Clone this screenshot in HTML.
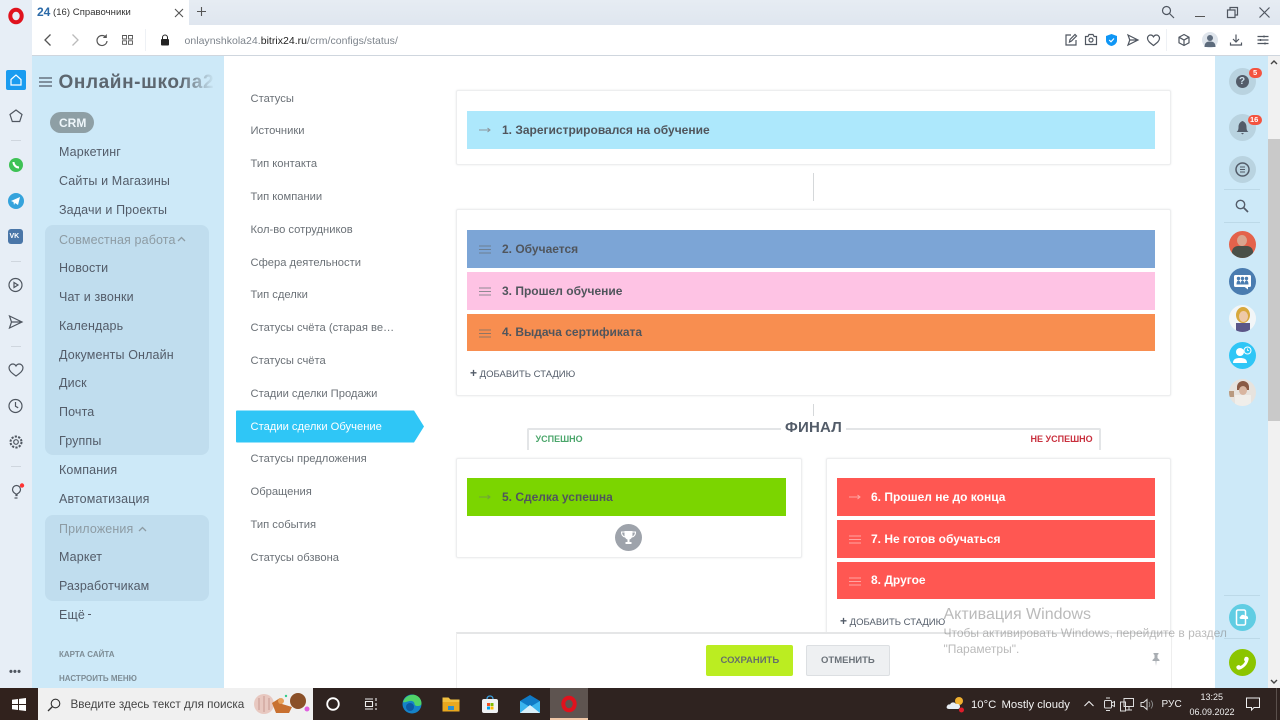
<!DOCTYPE html>
<html lang="ru"><head><meta charset="utf-8"><title>Справочники</title>
<style>
*{box-sizing:border-box}
html,body{margin:0;padding:0;width:1280px;height:720px;overflow:hidden;background:#fff;font-family:"Liberation Sans","Noto Sans CJK SC",sans-serif}
#w{position:absolute;left:0;top:0;width:1280px;height:720px;overflow:hidden;filter:blur(.3px)}
.a{position:absolute}
.t{position:absolute;white-space:nowrap;line-height:16px}
.m{position:absolute;left:59px;font-size:12.5px;color:#535c69;white-space:nowrap;line-height:16px;letter-spacing:.13px}
.s{position:absolute;left:250.5px;font-size:11.2px;color:#6b7177;white-space:nowrap;line-height:16px}
.box{position:absolute;background:#fff;border:1px solid #edeeef;border-radius:2px;box-shadow:0 0 2px #e8eaeb}
.bar{position:absolute;height:38px}
.bar b{position:absolute;left:35px;top:11px;font-size:12px;line-height:16px;white-space:nowrap;color:#50555c}
.bar.w b{color:#fff}
.bar svg{position:absolute;left:12px;top:13px}
.grp{position:absolute;left:45px;width:164px;background:rgba(110,150,170,.13);border-radius:8px}
.c{position:absolute;left:1229px;width:27px;height:27px;border-radius:50%}
svg{position:absolute;overflow:visible}
.i{fill:none;stroke:#4f5660;stroke-width:1.2}
</style></head><body><div id="w">

<!-- Opera left rail -->
<div class="a" style="left:0;top:0;width:32px;height:688px;background:#e7eef6"></div>
<div class="a" style="left:32px;top:0;width:1248px;height:25px;background:linear-gradient(#e6ecf3,#dfe6ef)"></div>
<svg style="left:7px;top:7px" width="18" height="18"><ellipse cx="9" cy="9" rx="5.7" ry="6.3" fill="none" stroke="#e0121d" stroke-width="4"/></svg>
<div class="a" style="left:6px;top:70px;width:20px;height:20px;background:#1a9cf0;border-radius:2px"></div>
<svg style="left:6px;top:70px" width="20" height="20"><path d="M5 9.5 10 5l5 4.5V15H5z" fill="none" stroke="#fff" stroke-width="1.2"/></svg>
<svg style="left:8px;top:108px" width="16" height="16"><path d="M8 2l6 4.500-2.300 7H4.300L2 6.500z" class="i"/></svg>
<div class="a" style="left:11px;top:140px;width:10px;height:1px;background:#cfd6de"></div>
<div class="a" style="left:9px;top:158px;width:14px;height:14px;border-radius:50%;background:#3ec255"></div>
<svg style="left:9px;top:158px" width="14" height="14"><path d="M4.500 4c0 3 2.500 5.500 5.500 5.500" fill="none" stroke="#fff" stroke-width="2"/></svg>
<div class="a" style="left:8px;top:193px;width:16px;height:16px;border-radius:50%;background:#35a3dc"></div>
<svg style="left:8px;top:193px" width="16" height="16"><path d="M3 8l9-4-2 8-3-2-1 2-.5-3z" fill="#fff"/></svg>
<div class="a" style="left:8px;top:229px;width:15px;height:15px;border-radius:3px;background:#4a76a8"></div>
<div class="t" style="left:9.500px;top:229px;font-size:7px;font-weight:bold;color:#fff">VK</div>
<div class="a" style="left:11px;top:261px;width:10px;height:1px;background:#cfd6de"></div>
<svg style="left:8px;top:277px" width="16" height="16"><circle cx="7.500" cy="8" r="6.500" class="i"/><path d="M6 5.500 10 8l-4 2.500z" class="i"/></svg>
<svg style="left:8px;top:314px" width="16" height="16"><path d="M1.500 2 14 8 1.500 14l2-6z M3.500 8H14" class="i"/></svg>
<div class="a" style="left:11px;top:346px;width:10px;height:1px;background:#cfd6de"></div>
<svg style="left:8px;top:362px" width="16" height="16"><path d="M8 14C3 10.500 1 8.500 1 5.800 1 3.500 3 2 4.800 2 6.200 2 7.300 2.800 8 4c.7-1.200 1.800-2 3.200-2C13 2 15 3.500 15 5.800c0 2.700-2 4.700-7 8.200z" class="i"/></svg>
<svg style="left:8px;top:398px" width="16" height="16"><circle cx="7.500" cy="8" r="6.500" class="i"/><path d="M7.500 4v4.300l2.700 1.500" class="i"/></svg>
<svg style="left:8px;top:434px" width="16" height="16"><circle cx="8" cy="8" r="2.300" class="i"/><circle cx="8" cy="8" r="5.500" fill="none" stroke="#4f5660" stroke-width="2" stroke-dasharray="2.200 1.300"/></svg>
<div class="a" style="left:11px;top:466px;width:10px;height:1px;background:#cfd6de"></div>
<svg style="left:9px;top:483px" width="16" height="18"><path d="M7 12.500V11C5 10 3.500 8.500 3.500 6.500a4 4 0 0 1 8 0c0 2-1.500 3.500-3.500 4.500v1.500z" class="i"/><path d="M5.500 15h3" class="i"/><circle cx="13" cy="2.500" r="2.200" fill="#f33" stroke="none"/></svg>
<div class="t" style="left:9px;top:664px;font-size:11px;font-weight:bold;color:#4f5660;letter-spacing:.2px">•••</div>

<!-- tab -->
<div class="a" style="left:32px;top:0;width:157px;height:25px;background:#fff"></div>
<div class="t" style="left:37px;top:4px;font-size:12px;font-weight:bold;color:#2b6aa8">24</div>
<div class="t" style="left:53px;top:5px;font-size:9.500px;color:#333;letter-spacing:.05px">(16) Справочники</div>
<svg style="left:174px;top:8px" width="10" height="10"><path d="M1 1l8 8M9 1 1 9" stroke="#555" stroke-width="1.100"/></svg>
<svg style="left:196px;top:6px" width="11" height="11"><path d="M5.500 1v9M1 5.500h9" stroke="#555" stroke-width="1.100"/></svg>
<!-- window controls -->
<svg style="left:1161px;top:5px" width="14" height="14"><circle cx="5.500" cy="5.500" r="4" class="i"/><path d="M8.500 8.500 13 13" class="i"/></svg>
<div class="a" style="left:1195px;top:16px;width:10px;height:1px;background:#555"></div>
<svg style="left:1227px;top:7px" width="11" height="11"><path d="M.5 3h7.500v7.500H.5zM3 3V.5h7.500V8H8" class="i"/></svg>
<svg style="left:1259px;top:7px" width="11" height="11"><path d="M.5.5l10 10M10.500.5l-10 10" class="i"/></svg>

<!-- address bar -->
<div class="a" style="left:32px;top:25px;width:1248px;height:30px;background:#fff"></div>
<div class="a" style="left:32px;top:55px;width:1248px;height:1px;background:#cfd6de"></div>
<svg style="left:43px;top:33px" width="10" height="14"><path d="M7.500 1.500 2 7l5.500 5.500" fill="none" stroke="#555" stroke-width="1.300"/></svg>
<svg style="left:70px;top:33px" width="10" height="14"><path d="M2.500 1.500 8 7l-5.500 5.500" fill="none" stroke="#bbb" stroke-width="1.300"/></svg>
<svg style="left:95px;top:33px" width="13" height="14"><path d="M11 4.500A5 5 0 1 0 12 8" fill="none" stroke="#555" stroke-width="1.200"/><path d="M11.800 1v4h-4z" fill="#555"/></svg>
<svg style="left:122px;top:35px" width="11" height="10"><path d="M.5.500h4v3.500h-4zM6.500.500h4v3.500h-4zM.5 5.800h4v3.500h-4zM6.500 5.800h4v3.500h-4z" fill="none" stroke="#555" stroke-width=".9"/></svg>
<div class="a" style="left:145px;top:29px;width:1px;height:22px;background:#eef1f5"></div>
<svg style="left:160px;top:34px" width="10" height="12"><path d="M2.500 5V3.500a2.500 2.500 0 0 1 5 0V5" fill="none" stroke="#222" stroke-width="1"/><rect x="1" y="5" width="8" height="6.500" rx="1" fill="#222"/></svg>
<div class="t" style="left:184.500px;top:32.500px;font-size:10.500px;color:#7d848c;letter-spacing:.02px">onlaynshkola24.<span style="color:#222">bitrix24.ru</span>/crm/configs/status/</div>
<svg style="left:1065px;top:33px" width="12" height="13"><path d="M6 2H1v10h10V7M4.500 9l.5-2.500L10 1.500l1.500 1.500-5 5z" class="i"/></svg>
<svg style="left:1085px;top:34px" width="12" height="11"><path d="M.5 2.500H3L4 .5h4l1 2h2.500v8H.5z" class="i"/><circle cx="6" cy="6" r="2" class="i"/></svg>
<svg style="left:1106px;top:34px" width="11" height="12"><path d="M5.500 0 11 2v4.500C11 9.500 8 11.500 5.500 12 3 11.500 0 9.500 0 6.500V2z" fill="#0f96f5"/><path d="M3.200 6 5 7.800 8 4.500" fill="none" stroke="#fff" stroke-width="1.100"/></svg>
<svg style="left:1127px;top:34px" width="12" height="12"><path d="M1 1l10 5-10 5 1.800-5z M2.800 6H11" class="i"/></svg>
<svg style="left:1147px;top:34px" width="13" height="12"><path d="M6.500 11.500C2.500 8.500.5 6.800.5 4.300.5 2.300 2 1 3.600 1c1.200 0 2.300.7 2.900 1.800C7.100 1.700 8.200 1 9.400 1 11 1 12.500 2.300 12.500 4.300c0 2.500-2 4.200-6 7.200z" class="i"/></svg>
<div class="a" style="left:1166px;top:29px;width:1px;height:22px;background:#eef1f5"></div>
<svg style="left:1178px;top:34px" width="12" height="12"><path d="M6 .5l5 2.700v5.600L6 11.500 1 8.800V3.200zM1 3.200 6 6l5-2.800M6 6v5.500" class="i"/></svg>
<div class="a" style="left:1202px;top:32px;width:16px;height:16px;border-radius:50%;background:#dfe5ec"></div>
<svg style="left:1202px;top:32px" width="16" height="16"><circle cx="8" cy="6" r="3" fill="#5d6b7c"/><path d="M2.500 15c0-4 2-5.500 5.500-5.500S13.500 11 13.500 15z" fill="#5d6b7c"/></svg>
<svg style="left:1230px;top:34px" width="12" height="12"><path d="M6 .5V8M3 5l3 3 3-3M.5 8.500v2.500h11V8.500" class="i"/></svg>
<svg style="left:1257px;top:35px" width="12" height="10"><path d="M.5 1.500h11M.5 5h11M.5 8.500h11" class="i" stroke-width="1"/><path d="M7 .5v2M3.500 4v2M8 7.500v2" class="i"/></svg>

<!-- Bitrix left sidebar -->
<div class="a" style="left:32px;top:56px;width:192px;height:632px;background:#cde9f8"></div>
<svg style="left:39px;top:77px" width="13" height="10"><path d="M0 1h13M0 5h13M0 9h13" stroke="#535c69" stroke-width="1.200"/></svg>
<div class="t" style="left:58.500px;top:72px;font-size:19px;line-height:22px;font-weight:bold;color:#5c666f;width:156px;overflow:hidden;letter-spacing:.6px;-webkit-mask-image:linear-gradient(90deg,#000 78%,transparent 100%);mask-image:linear-gradient(90deg,#000 78%,transparent 100%)">Онлайн-школа24</div>
<div class="a" style="left:50px;top:112px;width:44px;height:21px;border-radius:11px;background:#8e9fa5"></div>
<div class="t" style="left:59px;top:115px;font-size:12px;font-weight:bold;color:#eef6fa">CRM</div>
<div class="grp" style="top:225px;height:230px"></div>
<div class="grp" style="top:515px;height:86px"></div>
<div class="m" style="top:144px">Маркетинг</div>
<div class="m" style="top:173px">Сайты и Магазины</div>
<div class="m" style="top:202px">Задачи и Проекты</div>
<div class="m" style="top:232px;color:#8d9ba3">Совместная работа</div>
<svg style="left:177px;top:236px" width="9" height="6"><path d="M1 5l3.500-3.500L8 5" fill="none" stroke="#8d9ba3" stroke-width="1.300"/></svg>
<div class="m" style="top:260px">Новости</div>
<div class="m" style="top:289px">Чат и звонки</div>
<div class="m" style="top:318px">Календарь</div>
<div class="m" style="top:347px">Документы Онлайн</div>
<div class="m" style="top:375px">Диск</div>
<div class="m" style="top:404px">Почта</div>
<div class="m" style="top:433px">Группы</div>
<div class="m" style="top:462px">Компания</div>
<div class="m" style="top:491px">Автоматизация</div>
<div class="m" style="top:520.500px;color:#8d9ba3">Приложения</div>
<svg style="left:138px;top:526px" width="9" height="6"><path d="M1 5l3.500-3.500L8 5" fill="none" stroke="#8d9ba3" stroke-width="1.300"/></svg>
<div class="m" style="top:549px">Маркет</div>
<div class="m" style="top:578px">Разработчикам</div>
<div class="m" style="top:607px">Ещё</div>
<div class="a" style="left:88px;top:614px;width:3px;height:1px;background:#535c69"></div>
<div class="t" style="left:59px;top:647px;font-size:8px;font-weight:bold;color:#7d8c95">КАРТА САЙТА</div>
<div class="t" style="left:59px;top:671px;font-size:8px;font-weight:bold;color:#7d8c95">НАСТРОИТЬ МЕНЮ</div>

<!-- secondary menu -->
<div class="s" style="top:90.500px">Статусы</div>
<div class="s" style="top:123px">Источники</div>
<div class="s" style="top:156px">Тип контакта</div>
<div class="s" style="top:189px">Тип компании</div>
<div class="s" style="top:221.500px">Кол-во сотрудников</div>
<div class="s" style="top:254.500px">Сфера деятельности</div>
<div class="s" style="top:287px">Тип сделки</div>
<div class="s" style="top:320px">Статусы счёта (старая ве…</div>
<div class="s" style="top:353px">Статусы счёта</div>
<div class="s" style="top:385.500px">Стадии сделки Продажи</div>
<svg style="left:236px;top:410px" width="188" height="33"><path d="M1 .5H178L188 16.500 178 32.500H1a1 1 0 0 1-1-1V1.500a1 1 0 0 1 1-1z" fill="#2fc6f6"/></svg>
<div class="s" style="top:418.500px;color:#fff">Стадии сделки Обучение</div>
<div class="s" style="top:451px">Статусы предложения</div>
<div class="s" style="top:484px">Обращения</div>
<div class="s" style="top:517px">Тип события</div>
<div class="s" style="top:549.500px">Статусы обзвона</div>

<!-- main boxes -->
<div class="box" style="left:456px;top:90px;width:715px;height:75px"></div>
<div class="bar" style="left:467px;top:111px;width:688px;background:#ade8fc"><svg width="12" height="10" style="top:14px"><path d="M0 5h11M8.500 3l2.500 2-2.500 2" fill="none" stroke="#8b959c" stroke-width="1"/></svg><b>1. Зарегистрировался на обучение</b></div>
<div class="a" style="left:813px;top:173px;width:1px;height:28px;background:#d5d8da"></div>

<div class="box" style="left:456px;top:209px;width:715px;height:187px"></div>
<div class="bar" style="left:467px;top:230px;width:688px;background:#7ca5d6"><svg width="12" height="10" style="top:15px"><path d="M0 1h12M0 4.500h12M0 8h12" stroke="#6d7f92" stroke-width="1"/></svg><b>2. Обучается</b></div>
<div class="bar" style="left:467px;top:272px;width:688px;height:37.5px;background:#fec3e4"><svg width="12" height="10" style="top:15px"><path d="M0 1h12M0 4.500h12M0 8h12" stroke="#8f8a92" stroke-width="1"/></svg><b>3. Прошел обучение</b></div>
<div class="bar" style="left:467px;top:313.500px;width:688px;height:37.5px;background:#f88e50"><svg width="12" height="10" style="top:15px"><path d="M0 1h12M0 4.500h12M0 8h12" stroke="#8f7565" stroke-width="1"/></svg><b style="top:10px">4. Выдача сертификата</b></div>
<div class="t" style="left:470px;top:365px;font-size:9.5px;color:#535c69"><b style="font-size:12px">+</b> ДОБАВИТЬ СТАДИЮ</div>

<div class="a" style="left:813px;top:404px;width:1px;height:12px;background:#d5d8da"></div>
<div class="a" style="left:527px;top:428px;width:254px;height:22px;border:0 solid #e3e5e7;border-width:2px 0 0 2px;border-radius:2px 0 0 0"></div>
<div class="a" style="left:846px;top:428px;width:255px;height:22px;border:0 solid #e3e5e7;border-width:2px 2px 0 0;border-radius:0 2px 0 0"></div>
<div class="t" style="left:785px;top:420px;font-size:15px;font-weight:bold;color:#535c69;letter-spacing:.2px">ФИНАЛ</div>
<div class="t" style="left:535.500px;top:431px;font-size:9px;font-weight:bold;color:#4ba66b">УСПЕШНО</div>
<div class="t" style="left:1030.500px;top:431px;font-size:9px;font-weight:bold;color:#c9303e">НЕ УСПЕШНО</div>

<div class="box" style="left:456px;top:458px;width:346px;height:100px"></div>
<div class="bar" style="left:467px;top:478px;width:319px;background:#7bd500"><svg width="12" height="10" style="top:14px"><path d="M0 5h11M8.500 3l2.500 2-2.500 2" fill="none" stroke="#70a23c" stroke-width="1"/></svg><b>5. Сделка успешна</b></div>
<div class="a" style="left:615px;top:524px;width:27px;height:27px;border-radius:50%;background:#9ea3ab"></div>
<svg style="left:615px;top:524px" width="27" height="27"><path d="M9.500 7h8v4c0 2.500-1.500 4-3 4.500V18h2v2h-6v-2h2v-2.500c-1.500-.5-3-2-3-4.500z" fill="#fff"/><path d="M9.500 8H6.500c0 3 1.500 4.500 3.500 5M17.500 8h3c0 3-1.500 4.500-3.500 5" fill="none" stroke="#fff" stroke-width="1.100"/></svg>

<div class="box" style="left:826px;top:458px;width:345px;height:190px"></div>
<div class="bar w" style="left:837px;top:478px;width:318px;background:#ff5752"><svg width="12" height="10" style="top:14px"><path d="M0 5h11M8.500 3l2.500 2-2.500 2" fill="none" stroke="#ffa5a2" stroke-width="1"/></svg><b style="left:34px">6. Прошел не до конца</b></div>
<div class="bar w" style="left:837px;top:520px;width:318px;background:#ff5752"><svg width="12" height="10" style="top:15px"><path d="M0 1h12M0 4.500h12M0 8h12" stroke="#ffa5a2" stroke-width="1"/></svg><b style="left:34px">7. Не готов обучаться</b></div>
<div class="bar w" style="left:837px;top:561.500px;width:318px;height:37.5px;background:#ff5752"><svg width="12" height="10" style="top:15px"><path d="M0 1h12M0 4.500h12M0 8h12" stroke="#ffa5a2" stroke-width="1"/></svg><b style="left:34px;top:10px">8. Другое</b></div>
<div class="t" style="left:840px;top:613px;font-size:9.5px;color:#535c69"><b style="font-size:12px">+</b> ДОБАВИТЬ СТАДИЮ</div>

<!-- save panel -->
<div class="a" style="left:456px;top:632px;width:716px;height:56px;background:#fff;border-top:2px solid #e5e6e7;border-left:1px solid #eee;border-right:1px solid #eee"></div>
<div class="a" style="left:706px;top:645px;width:87px;height:31px;background:#bbed21;border-radius:2px"></div>
<div class="t" style="left:720.500px;top:653px;font-size:9.5px;font-weight:bold;color:#66706a">СОХРАНИТЬ</div>
<div class="a" style="left:806px;top:645px;width:84px;height:31px;background:#eef0f2;border:1px solid #dcdfe2;border-radius:2px"></div>
<div class="t" style="left:821px;top:653px;font-size:9.5px;font-weight:bold;color:#6b7279">ОТМЕНИТЬ</div>
<svg style="left:1151px;top:653px" width="10" height="13"><path d="M2.500 0h5v1l-1 1v3l2 2v1H1.500V7l2-2V2l-1-1zM4.500 8h1l-.5 5z" fill="#a8adb2"/></svg>

<!-- right sidebar -->
<div class="a" style="left:1215px;top:56px;width:53px;height:632px;background:#cde9f8"></div>
<div class="a" style="left:1268px;top:56px;width:12px;height:632px;background:#f1f1f1"></div>
<div class="a" style="left:1268px;top:139px;width:12px;height:282px;background:#c9c9c9"></div>
<svg style="left:1270px;top:59px" width="8" height="6"><path d="M1 5l3-3 3 3" fill="none" stroke="#444" stroke-width="1.400"/></svg>
<svg style="left:1270px;top:679px" width="8" height="6"><path d="M1 1l3 3 3-3" fill="none" stroke="#444" stroke-width="1.400"/></svg>

<div class="c" style="top:68px;background:#b9d3e0"></div>
<div class="a" style="left:1236px;top:75px;width:13px;height:13px;border-radius:50%;background:#535c69"></div>
<div class="t" style="left:1239px;top:74px;font-size:10px;font-weight:bold;color:#cfe3ee">?</div>
<div class="a" style="left:1249px;top:68px;width:13px;height:10px;border-radius:5px;background:#f4533f"></div>
<div class="t" style="left:1253px;top:65px;font-size:7.500px;font-weight:bold;color:#fff">5</div>
<div class="c" style="top:114px;background:#b9d3e0"></div>
<svg style="left:1236px;top:121px" width="13" height="14"><path d="M6.500 0C9 1 10.500 3 10.500 6c0 2.500.5 4 2 5H.5c1.500-1 2-2.500 2-5 0-3 1.500-5 4-6z" fill="#535c69"/><path d="M5 12h3l-1.500 1.500z" fill="#535c69"/></svg>
<div class="a" style="left:1248px;top:115px;width:14px;height:10px;border-radius:5px;background:#f4533f"></div>
<div class="t" style="left:1250px;top:112px;font-size:7.500px;font-weight:bold;color:#fff">16</div>
<div class="c" style="top:156px;background:#b9d3e0"></div>
<svg style="left:1235px;top:162px" width="16" height="16"><circle cx="7.500" cy="7.500" r="6.500" fill="none" stroke="#535c69" stroke-width="1.500"/><path d="M5 5h5M5 7.500h5M5 10h5" stroke="#535c69" stroke-width="1"/></svg>
<div class="a" style="left:1224px;top:189px;width:36px;height:1px;background:#bcd9e8"></div>
<svg style="left:1235px;top:199px" width="14" height="14"><circle cx="5.500" cy="5.500" r="4.200" fill="none" stroke="#535c69" stroke-width="1.400"/><path d="M8.500 8.500 13 13" stroke="#535c69" stroke-width="1.700"/></svg>
<div class="a" style="left:1224px;top:222px;width:36px;height:1px;background:#bcd9e8"></div>

<div class="c" style="top:231px;background:#e4624b;overflow:hidden"><div class="a" style="left:8px;top:4px;width:10px;height:11px;border-radius:50%;background:#d9a58f"></div><div class="a" style="left:3px;top:15px;width:21px;height:12px;border-radius:6px 6px 0 0;background:#4a5048"></div></div>
<div class="c" style="top:268px;background:#4a7cb0"></div>
<svg style="left:1229px;top:268px" width="27" height="27"><rect x="5" y="7" width="17" height="12" rx="1.500" fill="#fff"/><path d="M15 18.500h4v3z" fill="#fff"/><circle cx="9.500" cy="10.500" r="1.700" fill="#4a7cb0"/><circle cx="13.500" cy="10.500" r="1.700" fill="#4a7cb0"/><circle cx="17.500" cy="10.500" r="1.700" fill="#4a7cb0"/><path d="M7.500 16.500c0-3 1-4 2-4s2 1 2 4zM11.500 16.500c0-3 1-4 2-4s2 1 2 4zM15.500 16.500c0-3 1-4 2-4s2 1 2 4z" fill="#4a7cb0"/></svg>
<div class="c" style="top:305px;background:#f2f6f8;overflow:hidden"><div class="a" style="left:7px;top:2px;width:14px;height:16px;border-radius:50%;background:#d8a83c"></div><div class="a" style="left:10px;top:6px;width:9px;height:11px;border-radius:50%;background:#eec9a8"></div><div class="a" style="left:7px;top:18px;width:14px;height:9px;background:#5a5688"></div></div>
<div class="c" style="top:342px;background:#2fc6f6"></div>
<svg style="left:1229px;top:342px" width="27" height="27"><circle cx="11" cy="10" r="4" fill="#fff"/><path d="M4 21c0-4 3-5 7-5s7 1 7 5z" fill="#fff"/><circle cx="18.500" cy="8.500" r="3.500" fill="#2fc6f6" stroke="#fff" stroke-width="1"/><path d="M18.500 6.500v2h1.500" fill="none" stroke="#fff" stroke-width=".8"/></svg>
<div class="c" style="top:379px;background:#e7e3de;overflow:hidden"><div class="a" style="left:8px;top:2px;width:12px;height:9px;border-radius:6px 6px 0 0;background:#8a5a44"></div><div class="a" style="left:10px;top:7px;width:8px;height:9px;border-radius:50%;background:#d8b5a0"></div><div class="a" style="left:6px;top:16px;width:16px;height:11px;background:#f0eeea"></div><div class="a" style="left:0;top:12px;width:5px;height:6px;background:#b99a80"></div></div>

<div class="a" style="left:1224px;top:595px;width:36px;height:1px;background:#bcd9e8"></div>
<div class="c" style="top:604px;background:#60cde3"></div>
<svg style="left:1229px;top:604px" width="27" height="27"><rect x="7.500" y="6" width="9" height="15" rx="1.500" fill="none" stroke="#fff" stroke-width="1.500"/><path d="M12 15c-1.500 0-2-2-.5-2.500.5-2 3.500-2.500 4.500-.5 1.500-.5 3.500.5 3 2 .5 1 0 1-1 1z" fill="#fff"/></svg>
<div class="a" style="left:1224px;top:638px;width:36px;height:1px;background:#bcd9e8"></div>
<div class="c" style="top:649px;background:#8bc500"></div>
<svg style="left:1229px;top:649px" width="27" height="27"><path d="M7.500 19c-.5-1 0-2 1-2.500l1.500-.5 1.500 1c2-1 3.500-2.500 4.500-4.500l-1-1.500.5-2c.5-1.500 2-1.500 3-1 1 .5 1.500 1.500 1 3-1 4.500-4.500 8-8.500 9.500-1.500.5-3 0-3.500-1.500z" fill="#fff"/></svg>

<!-- taskbar -->
<div class="a" style="left:0;top:688px;width:1280px;height:32px;background:#2f2320"></div>
<div class="a" style="left:0;top:688px;width:38px;height:32px;background:#31221d"></div>
<svg style="left:12px;top:698px" width="14" height="13"><path d="M0 1.800 6 1v5H0zM7 .9 14 0v6H7zM0 7h6v5L0 11.200zM7 7h7v6l-7-.9z" fill="#fff"/></svg>
<div class="a" style="left:38px;top:688px;width:275px;height:32px;background:#f0f0f0"></div>
<svg style="left:47px;top:698px" width="14" height="14"><circle cx="8.500" cy="5.500" r="4.300" fill="none" stroke="#333" stroke-width="1.100"/><path d="M5.500 8.500 1 13" stroke="#333" stroke-width="1.300"/></svg>
<div class="t" style="left:70.500px;top:697px;font-size:11.7px;color:#444">Введите здесь текст для поиска</div>
<svg style="left:252px;top:690px" width="60" height="28"><circle cx="12" cy="14" r="10" fill="#e8c8c0"/><path d="M7 8v12M12 6v16M17 8v12" stroke="#c89a92" stroke-width="1"/><path d="M20 13l8-5 2 6 10 3-3 6H24z" fill="#c87030"/><circle cx="46" cy="11" r="8" fill="#8a5028"/><circle cx="29" cy="11" r="3" fill="#e8a058"/><circle cx="55" cy="19" r="2.500" fill="#e060e0"/><circle cx="34" cy="6" r="1.200" fill="#3c8"/></svg>

<svg style="left:325px;top:696px" width="16" height="16"><circle cx="8" cy="8" r="5.800" fill="none" stroke="#fff" stroke-width="1.800"/></svg>
<svg style="left:364px;top:697px" width="14" height="14"><path d="M1 2h8M1 12h8M1.500 4.500h7v5h-7zM12 1v3M12 6v3M12 11v2" fill="none" stroke="#eee" stroke-width="1.100"/></svg>
<svg style="left:402px;top:694px" width="20" height="20"><circle cx="10" cy="10" r="9.500" fill="#1583c9"/><path d="M1 8C3 2 9 0 13 1c4 1 6.500 4.500 6.500 8.500 0 2-2 2.500-4 2.500-2 0-3-1-3-2 0-2-2-3.500-5-3-2.500.5-5 2-6.500 1z" fill="#4fd46a"/><circle cx="8" cy="13" r="4" fill="#0d5aa5"/></svg>
<svg style="left:442px;top:696px" width="18" height="16"><path d="M.5 1.500h6l2 2h9v12H.5z" fill="#f2c040"/><rect x=".5" y="6" width="17" height="9.500" fill="#e8a820"/><rect x="6" y="10" width="6" height="4" fill="#2a8fd0"/></svg>
<svg style="left:481px;top:695px" width="18" height="18"><rect x="1" y="4" width="16" height="14" rx="2" fill="#f0f2f4"/><path d="M6 4c0-4 6-4 6 0" fill="none" stroke="#3aa0e0" stroke-width="1.300"/><rect x="6" y="8" width="3" height="3" fill="#f25022"/><rect x="9.500" y="8" width="3" height="3" fill="#7fba00"/><rect x="6" y="11.500" width="3" height="3" fill="#00a4ef"/><rect x="9.500" y="11.500" width="3" height="3" fill="#ffb900"/></svg>
<svg style="left:520px;top:695px" width="20" height="18"><path d="M0 6 10 0l10 6v12H0z" fill="#0f7ac6"/><path d="M0 6l10 6 10-6v12H0z" fill="#3ab4ee"/><path d="M0 18 10 10l10 8z" fill="#d9f0fb"/></svg>
<div class="a" style="left:550px;top:688px;width:38px;height:32px;background:#5e5450;border-bottom:2px solid #f0c8a8"></div>
<svg style="left:560px;top:695px" width="18" height="18"><ellipse cx="9" cy="9" rx="5.700" ry="6.300" fill="none" stroke="#e0121d" stroke-width="4"/></svg>

<svg style="left:946px;top:695px" width="20" height="20"><circle cx="13" cy="6" r="4" fill="#f0b030"/><path d="M3 14c-2 0-3-1.500-2-3 .5-1.500 2-2 3-1.500C5 7 8.500 6.500 10 9c2-.5 4 .5 4 2.500 0 1.500-1 2.500-2.500 2.500z" fill="#e8eef4"/><circle cx="15.500" cy="15" r="2.500" fill="#e01c2a"/></svg>
<div class="t" style="left:971px;top:697px;font-size:11.3px;color:#f2f2f2">10°C</div>
<div class="t" style="left:1001.500px;top:697px;font-size:11.3px;color:#f2f2f2">Mostly cloudy</div>
<svg style="left:1084px;top:700px" width="10" height="7"><path d="M.5 6 5 1.500 9.500 6" fill="none" stroke="#eee" stroke-width="1.100"/></svg>
<svg style="left:1103px;top:697px" width="12" height="15"><rect x="1.500" y="3.500" width="7" height="7.500" rx="1" fill="none" stroke="#ddd"/><path d="M8.500 6l3-1.500v5L8.500 8M3 1h4M3 13.500h4" fill="none" stroke="#ddd"/></svg>
<svg style="left:1120px;top:698px" width="14" height="14"><path d="M4 .5h9.500v8H4zM.5 4h5v9h-5zM9 8.500v3M6 12h6" fill="none" stroke="#ddd" stroke-width="1"/></svg>
<svg style="left:1140px;top:698px" width="14" height="13"><path d="M1 4.500h2.500L7 1.500v10L3.500 8.500H1z" fill="none" stroke="#ddd"/><path d="M9 4c1 1.500 1 3.500 0 5M11 2.500c2 2.500 2 5.500 0 8" fill="none" stroke="#888"/></svg>
<div class="t" style="left:1161.500px;top:697px;font-size:10px;color:#eee;letter-spacing:.1px">РУС</div>
<div class="t" style="left:1200.500px;top:689px;font-size:9px;color:#eee">13:25</div>
<div class="t" style="left:1189.500px;top:703.500px;font-size:9px;color:#eee">06.09.2022</div>
<svg style="left:1246px;top:697px" width="14" height="14"><path d="M.5 1h13v9.500H8L5.500 13V10.500h-5z" fill="none" stroke="#eee"/></svg>
<div class="a" style="left:1276px;top:688px;width:1px;height:32px;background:#5a504c"></div>

<!-- Windows activation watermark -->
<div class="t" style="left:943.500px;top:606px;font-size:16px;line-height:18px;color:rgba(130,130,130,.55)">Активация Windows</div>
<div class="t" style="left:943.500px;top:625px;font-size:12px;color:rgba(130,130,130,.55)">Чтобы активировать Windows, перейдите в раздел</div>
<div class="t" style="left:943.500px;top:641px;font-size:12px;color:rgba(130,130,130,.55)">"Параметры".</div>

</div></body></html>
